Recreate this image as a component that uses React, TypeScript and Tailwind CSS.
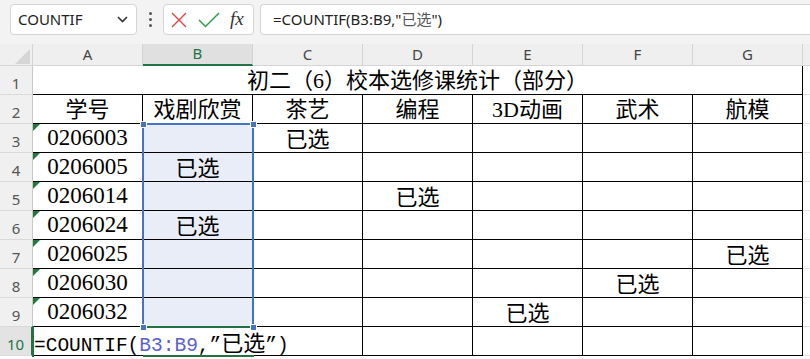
import React from "react";

const CJK = { fontFamily: '"Liberation Serif", "Noto Sans CJK SC", serif' };
const UI = { fontFamily: '"Noto Sans", "Liberation Sans", sans-serif' };

const headers = ["学号", "戏剧欣赏", "茶艺", "编程", "3D动画", "武术", "航模"];
const rows: { id: string; col: number }[] = [
  { id: "0206003", col: 2 },
  { id: "0206005", col: 1 },
  { id: "0206014", col: 3 },
  { id: "0206024", col: 1 },
  { id: "0206025", col: 6 },
  { id: "0206030", col: 5 },
  { id: "0206032", col: 4 },
];
const letters = ["A", "B", "C", "D", "E", "F", "G"];

function RowHead({ n, active }: { n: number; active?: boolean }) {
  return (
    <div
      className={
        "flex items-end justify-center pb-[1px] text-[15px] leading-[20px] border-b border-[#d9d9d9] " +
        (active
          ? "bg-[#e3e3e3] text-[#217346] border-r-2 border-r-[#217346]"
          : "bg-[#f0f0f0] text-[#555] border-r border-r-[#c8c8c8]")
      }
      style={UI}
    >
      {n}
    </div>
  );
}

function Handle({ x, y }: { x: number; y: number }) {
  return (
    <div
      className="absolute w-[7px] h-[7px] bg-[#4472c4] border border-white z-50"
      style={{ left: x - 3, top: y - 3 }}
    />
  );
}

export default function App() {
  return (
    <div className="w-[810px] h-[359px] overflow-hidden bg-white text-black">
      {/* toolbar */}
      <div className="h-[44px] bg-[#f3f3f3] flex items-start pt-[4px] pl-[10px]">
        <div className="w-[127px] h-[31px] bg-white border border-[#d4d4d4] rounded-[4px] flex items-center justify-between pl-[7px] pr-[8px]">
          <span className="text-[15px] text-[#222]" style={UI}>COUNTIF</span>
          <svg width="11" height="7" viewBox="0 0 11 7">
            <path d="M1 1 L5.5 5.5 L10 1" fill="none" stroke="#333" strokeWidth="1.6" />
          </svg>
        </div>
        <div className="w-[26px] h-[31px] flex flex-col items-center justify-center gap-[3px]">
          <div className="w-[3px] h-[3px] rounded-full bg-[#555]" />
          <div className="w-[3px] h-[3px] rounded-full bg-[#555]" />
          <div className="w-[3px] h-[3px] rounded-full bg-[#555]" />
        </div>
        <div className="w-[91px] h-[31px] bg-white border border-[#d4d4d4] rounded-[4px] flex items-center pl-[6px] gap-[10px]">
          <svg width="18" height="16" viewBox="0 0 18 16">
            <path d="M2 1 L16 15 M16 1 L2 15" stroke="#e34040" strokeWidth="1.4" fill="none" />
          </svg>
          <svg width="22" height="16" viewBox="0 0 22 16">
            <path d="M1 8 L7.5 14.5 L21 1" stroke="#2e9e4e" strokeWidth="1.5" fill="none" />
          </svg>
          <span
            className="italic text-[19px] leading-none text-[#333] -mt-[2px]"
            style={{ fontFamily: '"Liberation Serif", serif' }}
          >
            fx
          </span>
        </div>
        <div className="ml-[6px] flex-1 h-[31px] bg-white border border-[#d4d4d4] rounded-l-[4px] border-r-0 flex items-center pl-[12px]">
          <span className="text-[15px] text-[#222]" style={{ fontFamily: '"Noto Sans", "Noto Sans CJK SC", sans-serif' }}>
            =COUNTIF(B3:B9,"<span className="text-[#555]">已选</span>")
          </span>
        </div>
      </div>

      {/* sheet */}
      <div className="relative grid grid-cols-[33px_repeat(7,110px)_1fr] grid-rows-[22px_repeat(10,29px)_1fr]">
        {/* corner */}
        <div className="bg-[#efefef] border-r border-b border-[#d4d4d4] relative">
          <svg className="absolute left-[15px] top-[5px]" width="15" height="15" viewBox="0 0 15 15">
            <path d="M15 0 L15 15 L0 15 Z" fill="#d6d6d6" />
          </svg>
        </div>
        {letters.map((l) => (
          <div
            key={l}
            className={
              "flex items-end justify-center pb-[1px] text-[15px] leading-[20px] border-r border-r-[#d4d4d4] " +
              (l === "B"
                ? "bg-[#e0e0e0] text-[#217346] border-b-2 border-b-[#217346]"
                : "bg-[#efefef] text-[#444] border-b border-b-[#d4d4d4]")
            }
            style={UI}
          >
            {l}
          </div>
        ))}
        <div className="bg-[#efefef] border-b border-[#d4d4d4]" />

        {/* row 1 */}
        <RowHead n={1} />
        <div
          className="col-span-7 flex items-center justify-center text-[22px] border-r border-b border-black"
          style={CJK}
        >
          初二（6）校本选修课统计（部分）
        </div>
        <div className="border-b border-[#e0e0e0]" />

        {/* row 2 */}
        <RowHead n={2} />
        {headers.map((h) => (
          <div
            key={h}
            className="flex items-center justify-center text-[22px] border-r border-b border-black"
            style={CJK}
          >
            {h}
          </div>
        ))}
        <div className="border-b border-[#e0e0e0]" />

        {/* rows 3-9 */}
        {rows.map((r, i) => (
          <React.Fragment key={r.id}>
            <RowHead n={i + 3} />
            <div
              className="relative flex items-center justify-center text-[23px] border-r border-b border-black"
              style={CJK}
            >
              <svg className="absolute left-0 top-0" width="7" height="7" viewBox="0 0 7 7">
                <path d="M0 0 L7 0 L0 7 Z" fill="#1f7a3c" />
              </svg>
              {r.id}
            </div>
            {[1, 2, 3, 4, 5, 6].map((c) => (
              <div
                key={c}
                className={
                  "flex items-center justify-center pt-[2px] text-[22px] border-r border-b border-black " +
                  (c === 1 ? "bg-[#e9edf7]" : "")
                }
                style={CJK}
              >
                {r.col === c ? "已选" : ""}
              </div>
            ))}
            <div className="border-b border-[#e0e0e0]" />
          </React.Fragment>
        ))}

        {/* row 10 */}
        <RowHead n={10} active />
        <div className="relative z-40 flex items-center whitespace-nowrap overflow-visible border-b border-black pl-[1px]">
          <span
            className="shrink-0 inline-block h-[22px] leading-[22px] text-[19.5px] bg-white pr-[2px]"
            style={{ fontFamily: '"Liberation Mono", monospace' }}
          >
            =COUNTIF(<span className="text-[#5b62c9]">B3:B9</span>,”
            <span className="text-[22px] leading-none" style={{ fontFamily: '"Noto Sans CJK SC", sans-serif' }}>已选</span>”)
          </span>
        </div>
        {[1, 2, 3, 4, 5, 6].map((c) => (
          <div key={c} className={"border-b border-black " + (c === 1 ? "" : "border-r")} />
        ))}
        <div className="border-b border-[#e0e0e0]" />

        {/* overlays */}
        <div className="absolute left-[142px] top-[79px] w-[112px] h-[205px] border-2 border-[#4472c4] z-20 pointer-events-none" />
        <div className="absolute left-[143px] top-[282px] w-[111px] h-[31px] border-y-2 border-[#217346] z-20 pointer-events-none" />
        <div className="absolute left-[32px] top-[282px] w-[2px] h-[31px] bg-[#217346] z-50" />
        <Handle x={143} y={80} />
        <Handle x={253} y={80} />
        <Handle x={143} y={283} />
        <Handle x={253} y={283} />
      </div>
    </div>
  );
}
